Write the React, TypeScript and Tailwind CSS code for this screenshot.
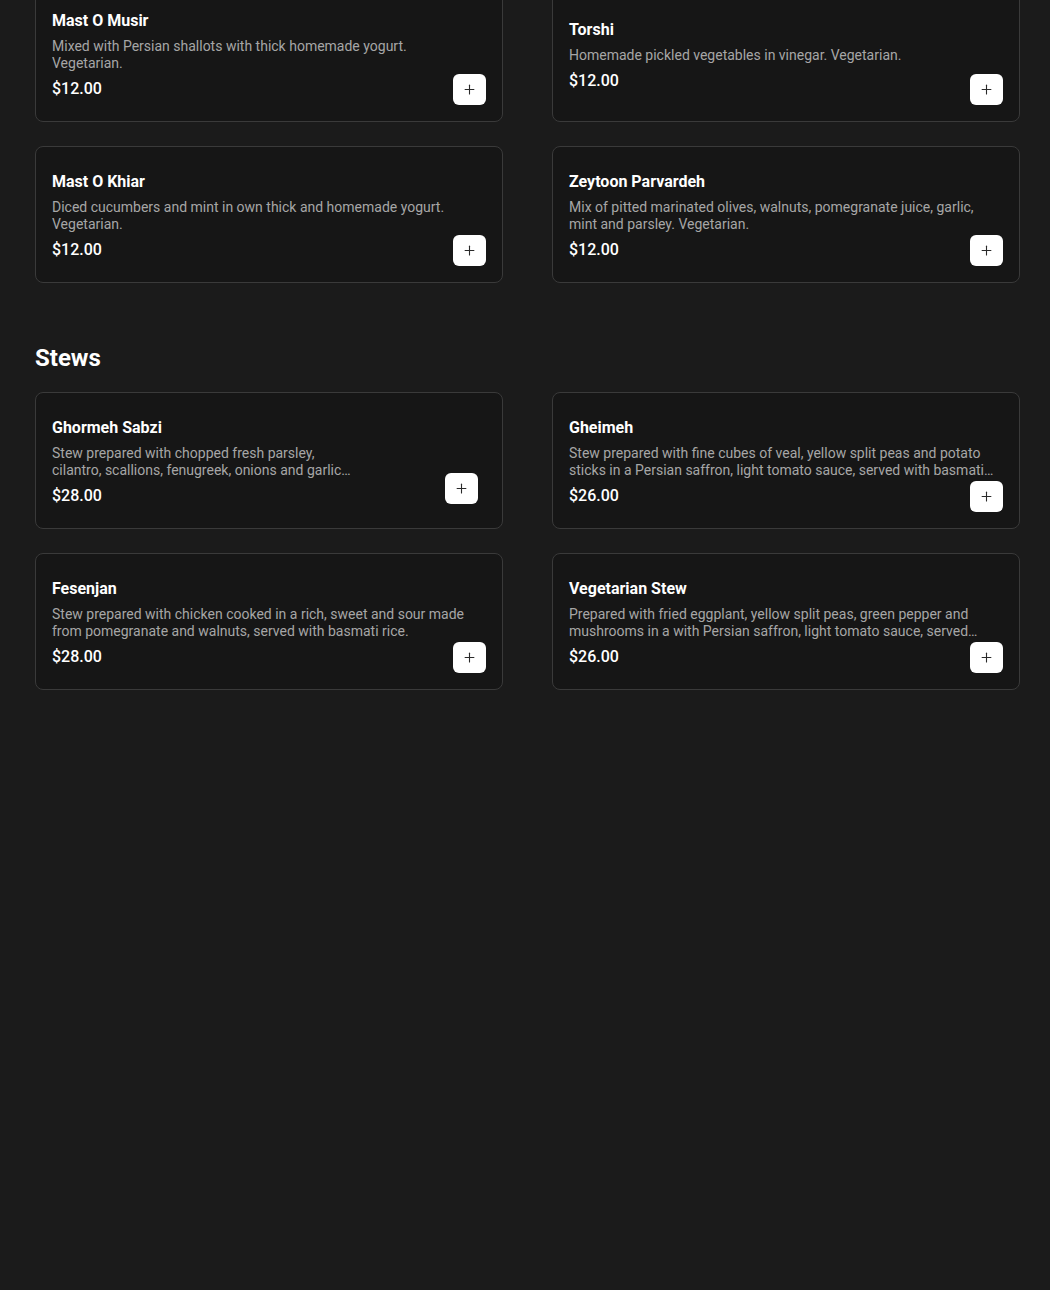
import { Plus } from "lucide-react"

interface MenuItem {
  name: string
  description: string
  price: string
  narrow?: boolean
}

const starters: MenuItem[] = [
  {
    name: "Mast O Musir",
    description: "Mixed with Persian shallots with thick homemade yogurt. Vegetarian.",
    price: "$12.00",
  },
  {
    name: "Torshi",
    description: "Homemade pickled vegetables in vinegar. Vegetarian.",
    price: "$12.00",
  },
  {
    name: "Mast O Khiar",
    description: "Diced cucumbers and mint in own thick and homemade yogurt. Vegetarian.",
    price: "$12.00",
  },
  {
    name: "Zeytoon Parvardeh",
    description: "Mix of pitted marinated olives, walnuts, pomegranate juice, garlic, mint and parsley. Vegetarian.",
    price: "$12.00",
  },
]

const stews: MenuItem[] = [
  {
    name: "Ghormeh Sabzi",
    description:
      "Stew prepared with chopped fresh parsley, cilantro, scallions, fenugreek, onions and garlic with red kidney beans and dried lime, served with basmati rice.",
    price: "$28.00",
    narrow: true,
  },
  {
    name: "Gheimeh",
    description:
      "Stew prepared with fine cubes of veal, yellow split peas and potato sticks in a Persian saffron, light tomato sauce, served with basmati rice.",
    price: "$26.00",
  },
  {
    name: "Fesenjan",
    description:
      "Stew prepared with chicken cooked in a rich, sweet and sour made from pomegranate and walnuts, served with basmati rice.",
    price: "$28.00",
  },
  {
    name: "Vegetarian Stew",
    description:
      "Prepared with fried eggplant, yellow split peas, green pepper and mushrooms in a with Persian saffron, light tomato sauce, served with basmati rice.",
    price: "$26.00",
  },
]

function MenuCard({ item }: { item: MenuItem }) {
  return (
    <div className="relative flex flex-col justify-center rounded-lg border border-[#3a3a3a] bg-[#161616] pl-4 pr-6 pt-[23px] pb-[20px]">
      <h3 className="text-base leading-6 font-bold text-white">{item.name}</h3>
      <p
        className={
          item.narrow
            ? "mt-[5px] max-w-[300px] text-sm leading-[17px] text-[#a6a6a6] line-clamp-2"
            : "mt-[5px] text-sm leading-[17px] text-[#a6a6a6] line-clamp-2"
        }
      >
        {item.description}
      </p>
      <p className="mt-[5px] text-base leading-6 font-medium text-white">{item.price}</p>
      <button
        className={
          item.narrow
            ? "absolute right-6 bottom-6 flex h-[31px] w-[33px] items-center justify-center rounded-md bg-white text-[#2a2a2a]"
            : "absolute right-4 bottom-4 flex h-[31px] w-[33px] items-center justify-center rounded-md bg-white text-[#2a2a2a]"
        }
      >
        <Plus size={15} strokeWidth={1.75} />
      </button>
    </div>
  )
}

export default function App() {
  return (
    <div
      className="min-h-screen bg-[#1b1b1b] pl-[35px] pr-[30px]"
      style={{ fontFamily: "Roboto, 'Liberation Sans', sans-serif" }}
    >
      {/* Appetizers (scrolled, top cut off) */}
      <div className="-mt-[15px] grid grid-cols-2 gap-x-[49px] gap-y-6">
        {starters.map((item) => (
          <MenuCard key={item.name} item={item} />
        ))}
      </div>

      {/* Stews */}
      <h2 className="mt-[59px] mb-[18px] text-2xl leading-8 font-bold text-white">Stews</h2>
      <div className="grid grid-cols-2 gap-x-[49px] gap-y-6">
        {stews.map((item) => (
          <MenuCard key={item.name} item={item} />
        ))}
      </div>
    </div>
  )
}
